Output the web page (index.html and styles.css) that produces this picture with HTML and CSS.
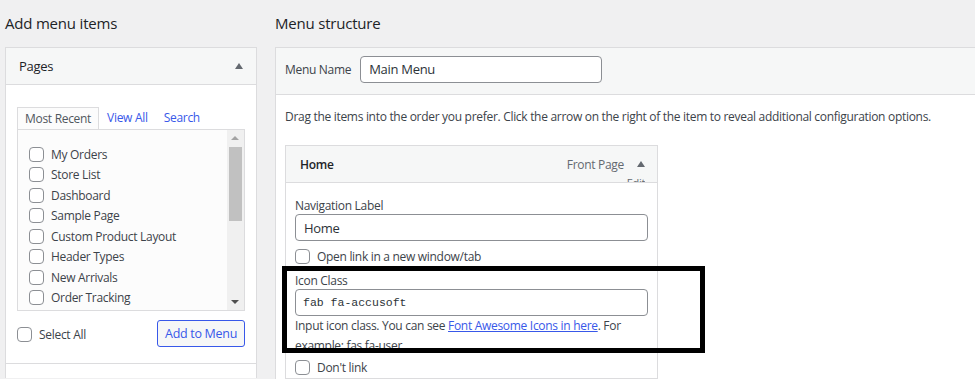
FILE: index.html
```html
<!DOCTYPE html>
<html lang="en">
<head>
    <meta charset="UTF-8">
    <title>Menus</title>
    <link rel="stylesheet" href="styles.css">
</head>
<body>
    <div class="menus-wrap">
        <!-- left column: add items -->
        <div class="col-left">
            <h2 class="col-title">Add menu items</h2>
            <div class="accordion">
                <div class="acc-head">
                    <span>Pages</span>
                    <span class="tri-up"></span>
                </div>
                <div class="acc-body">
                    <ul class="tabs">
                        <li class="tab active">Most Recent</li>
                        <li class="tab"><a href="#">View All</a></li>
                        <li class="tab"><a href="#">Search</a></li>
                    </ul>
                    <div class="list-box">
                        <ul class="page-list">
                            <li><span class="check"></span>My Orders</li>
                            <li><span class="check"></span>Store List</li>
                            <li><span class="check"></span>Dashboard</li>
                            <li><span class="check"></span>Sample Page</li>
                            <li><span class="check"></span>Custom Product Layout</li>
                            <li><span class="check"></span>Header Types</li>
                            <li><span class="check"></span>New Arrivals</li>
                            <li><span class="check"></span>Order Tracking</li>
                        </ul>
                        <div class="fake-scroll">
                            <span class="arrow-up"></span>
                            <span class="thumb"></span>
                            <span class="arrow-down"></span>
                        </div>
                    </div>
                    <div class="list-actions">
                        <label class="select-all"><span class="check"></span>Select All</label>
                        <button class="btn-add">Add to Menu</button>
                    </div>
                </div>
                <div class="acc-next"></div>
            </div>
        </div>

        <!-- right column: menu structure -->
        <div class="col-right">
            <h2 class="col-title">Menu structure</h2>
            <div class="menu-panel">
                <div class="menu-head">
                    <label class="name-label">Menu Name</label>
                    <input class="name-input" type="text" value="Main Menu">
                </div>
                <div class="menu-body">
                    <p class="drag-hint">Drag the items into the order you prefer. Click the arrow on the right of the item to reveal additional configuration options.</p>
                    <div class="menu-item">
                        <div class="item-bar">
                            <span class="item-title">Home</span>
                            <span class="item-type">Front Page</span>
                            <span class="tri-up"></span>
                            <span class="item-edit">Edit</span>
                        </div>
                        <div class="item-settings">
                            <label class="field-label">Navigation Label</label>
                            <input class="field-input" type="text" value="Home">
                            <label class="check-row"><span class="check"></span>Open link in a new window/tab</label>
                            <label class="field-label icon-label">Icon Class</label>
                            <input class="field-input mono" type="text" value="fab fa-accusoft">
                            <p class="field-desc">Input icon class. You can see <a href="#">Font Awesome Icons in here</a>. For example: fas fa-user</p>
                            <label class="check-row last"><span class="check"></span>Don't link</label>
                        </div>
                    </div>
                </div>
            </div>
        </div>
    </div>

    <!-- annotation box drawn over the screenshot -->
    <div class="highlight"></div>
</body>
</html>
```

FILE: styles.css
```css
body {
    margin: 0;
    background: #f0f0f1;
    font-family: "Open Sans", "Noto Sans", sans-serif;
    font-size: 12px;
    letter-spacing: -0.3px;
    color: #3c434a;
    height: 379px;
    overflow: hidden;
}
.menus-wrap {
    display: flex;
    gap: 18px;
    padding-left: 5px;
}
.col-left {
    width: 252px;
    flex-shrink: 0;
}
.col-right {
    width: 720px;
    flex-shrink: 0;
}
.col-title {
    font-size: 15px;
    font-weight: 400;
    letter-spacing: -0.2px;
    color: #1d2327;
    margin: 0;
    height: 47px;
    line-height: 46px;
}
a {
    color: #3858e9;
    text-decoration: none;
}

/* left accordion */
.accordion {
    border: 1px solid #dcdcde;
    border-bottom: none;
    background: #fff;
}
.acc-head {
    height: 36px;
    background: #f6f7f7;
    border-bottom: 1px solid #dcdcde;
    display: flex;
    align-items: center;
    justify-content: space-between;
    padding: 0 13px;
    font-size: 13px;
    color: #1d2327;
}
.tri-up {
    width: 0;
    height: 0;
    border-left: 4.5px solid transparent;
    border-right: 4.5px solid transparent;
    border-bottom: 6px solid #646970;
}
.acc-body {
    padding: 22px 11px 16px 11px;
}
.tabs {
    list-style: none;
    margin: 0;
    padding: 0;
    display: flex;
}
.tab {
    height: 22px;
    line-height: 22px;
    padding: 0 8px;
}
.tab.active {
    border: 1px solid #dcdcde;
    border-bottom: none;
    padding: 0 7px;
    background: #fcfcfc;
    color: #50575e;
    margin-bottom: -1px;
    position: relative;
}
.list-box {
    position: relative;
    height: 180px;
    border: 1px solid #dcdcde;
    background: #fcfcfc;
    overflow: hidden;
}
.page-list {
    list-style: none;
    margin: 0;
    padding: 14px 0 0 11px;
}
.page-list li {
    display: flex;
    align-items: center;
    height: 20.5px;
    color: #3c434a;
}
.check {
    width: 13px;
    height: 13px;
    border: 1px solid #8c8f94;
    border-radius: 4px;
    background: #fff;
    margin-right: 7px;
    flex-shrink: 0;
}
.fake-scroll {
    position: absolute;
    top: 0;
    right: 0;
    width: 17px;
    height: 100%;
    background: #f0f0f0;
}
.arrow-up, .arrow-down {
    position: absolute;
    left: 4px;
    width: 0;
    height: 0;
    border-left: 4px solid transparent;
    border-right: 4px solid transparent;
}
.arrow-up {
    top: 6px;
    border-bottom: 4px solid #a3a3a3;
}
.arrow-down {
    bottom: 6px;
    border-top: 4px solid #505050;
}
.thumb {
    position: absolute;
    left: 2px;
    top: 17px;
    width: 13px;
    height: 74px;
    background: #c1c1c1;
}
.list-actions {
    display: flex;
    align-items: center;
    justify-content: space-between;
    margin-top: 9px;
}
.select-all {
    display: flex;
    align-items: center;
    padding-top: 2px;
}
.btn-add {
    font-family: inherit;
    font-size: 12.5px;
    letter-spacing: -0.3px;
    color: #3858e9;
    background: #f6f7f7;
    border: 1px solid #3858e9;
    border-radius: 3px;
    height: 27px;
    padding: 0 7px;
}
.acc-next {
    height: 14px;
    border-top: 1px solid #dcdcde;
}

/* right panel */
.menu-panel {
    border: 1px solid #dcdcde;
    border-bottom: none;
    background: #fff;
    height: 332px;
    overflow: hidden;
}
.menu-head {
    height: 47px;
    box-sizing: border-box;
    background: #f6f7f7;
    border-bottom: 1px solid #dcdcde;
    display: flex;
    align-items: center;
    padding: 0 0 4px 9px;
    gap: 9px;
}
.name-input, .field-input {
    font-family: inherit;
    font-size: 13px;
    letter-spacing: -0.3px;
    color: #2c3338;
    border: 1px solid #8c8f94;
    border-radius: 4px;
    background: #fff;
    box-sizing: border-box;
    padding: 0 8px;
}
.name-input {
    width: 242px;
    height: 27px;
}
.menu-body {
    padding: 0 9px;
}
.drag-hint {
    margin: 0;
    padding-top: 13px;
    height: 37px;
    line-height: 18px;
}
.menu-item {
    width: 373px;
}
.item-bar {
    position: relative;
    height: 36px;
    border: 1px solid #dcdcde;
    background: #f6f7f7;
    display: flex;
    align-items: center;
    padding: 0 12px 0 14px;
}
.item-title {
    font-weight: 600;
    color: #1d2327;
    flex: 1;
}
.item-type {
    color: #646970;
    margin-right: 13px;
}
.item-edit {
    position: absolute;
    right: 12px;
    top: 31px;
    color: #646970;
    font-size: 11px;
    height: 5px;
    line-height: 11px;
    overflow: hidden;
}
.item-settings {
    border: 1px solid #dcdcde;
    border-top: none;
    padding: 15px 9px 0 9px;
    background: #fff;
}
.field-label {
    display: block;
    line-height: 16px;
}
.icon-label {
    margin-top: 2px;
}
.field-input {
    display: block;
    width: 353px;
    height: 27px;
}
.field-input.mono {
    font-family: "Liberation Mono", "DejaVu Sans Mono", monospace;
    font-size: 11.5px;
    letter-spacing: 0;
    padding-left: 7px;
}
.check-row {
    display: flex;
    align-items: center;
    height: 30px;
}
.check-row.last {
    height: 22px;
}
.field-desc {
    margin: 0;
    line-height: 20px;
    width: 350px;
}
.field-desc a {
    text-decoration: underline;
}

/* annotation */
.highlight {
    position: absolute;
    left: 282px;
    top: 266px;
    width: 413px;
    height: 77px;
    border: 5px solid #000;
}
```
